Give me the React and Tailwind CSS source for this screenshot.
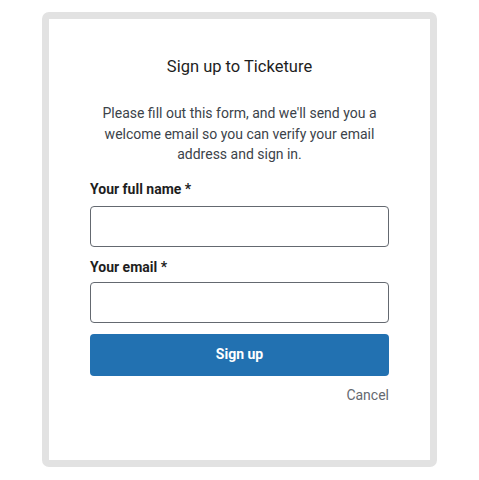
export default function App() {
  const font = { fontFamily: 'Roboto, "Noto Sans", sans-serif' };
  return (
    <div className="w-[479px] h-[480px] bg-white pt-[12px] pl-[42px]" style={font}>
      <div className="w-[395px] h-[455px] border-[7px] border-[#e2e2e2] rounded-[7px] bg-white">
        <div className="px-[41px] pt-[36px] flex flex-col">
          <h1 className="text-center text-[16.5px] leading-[24px] text-[#1e1e1e] font-normal">Sign up to Ticketure</h1>
          <p className="mt-[24px] text-center text-[14px] leading-[20.5px] text-[#3c434a] px-[4px]">
            Please fill out this form, and we'll send you a welcome email so you can verify your email address and sign in.
          </p>
          <label className="mt-[14px] text-[14px] leading-[20px] font-bold text-[#1e1e1e]">Your full name *</label>
          <input className="mt-[7px] h-[41px] w-full border border-[#646970] rounded-[4px] outline-none" />
          <label className="mt-[10px] text-[14px] leading-[20px] font-bold text-[#1e1e1e]">Your email *</label>
          <input className="mt-[5px] h-[41px] w-full border border-[#646970] rounded-[4px] outline-none" />
          <button className="mt-[11px] h-[42px] w-full bg-[#2271b1] rounded-[4px] text-white text-[14px] font-bold">Sign up</button>
          <div className="mt-[9px] text-right text-[14px] leading-[20px] text-[#646970]">Cancel</div>
        </div>
      </div>
    </div>
  );
}
